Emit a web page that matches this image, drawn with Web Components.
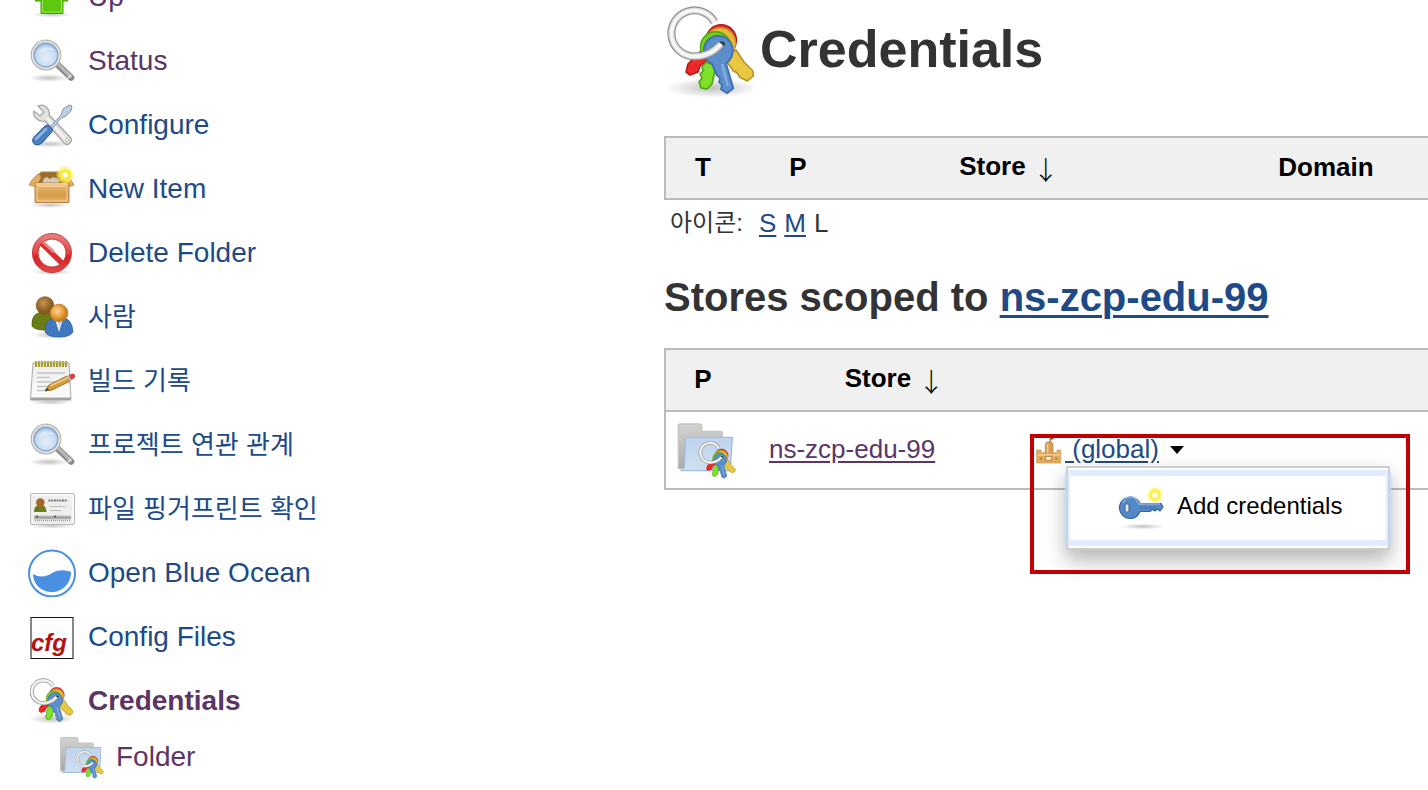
<!DOCTYPE html>
<html lang="ko">
<head>
<meta charset="utf-8">
<title>Credentials</title>
<style>
html { background: #fff; }
body { margin: 0; height: 100vh; overflow: hidden; color: #333;
  font-family: "Liberation Sans", "Noto Sans CJK KR", sans-serif; font-size: 26px; }
</style>
</head>
<body>
<credentials-page></credentials-page>

<script>
const define = (name, html, setup) => {
  const template = document.createElement('template');
  template.innerHTML = html;
  customElements.define(name, class extends HTMLElement {
    connectedCallback() {
      if (this.shadowRoot) return;
      const content = template.content.cloneNode(true);
      if (setup) setup(this, content);
      this.attachShadow({ mode: 'open' }).append(content);
    }
  });
};

/* ---------- icon drawings, all on a 48 unit grid ---------- */
const shade = (cx, cy, rx, ry) =>
  `<radialGradient id="sh"><stop offset="0" stop-opacity=".24"/><stop offset=".5" stop-opacity=".12"/><stop offset="1" stop-opacity="0"/></radialGradient>
   <ellipse cx="${cx}" cy="${cy}" rx="${rx}" ry="${ry}" fill="url(#sh)"/>`;

const ring = 'M28.500 20C25.500 23.500 21 26.200 15.200 26.200A11.500 11.500 0 1 1 25.200 9';
const keys = `
  <g stroke-linejoin="round">
    <path d="M20 22l4 4-6 5-1 3-4 1.500-2-1.500 1-4z" fill="#ef2929" stroke="#b81818" stroke-width=".8"/>
    <circle cx="28.600" cy="18" r="7.600" fill="#dd3325" stroke="#b81818" stroke-width=".7"/>
    <path d="M30 27l6-4 4 6 4.500 4.500.2 2.500-3 2.500-4-2-1-2-2-1z" fill="#e8c840" stroke="#b8922a" stroke-width=".8"/>
    <circle cx="28.200" cy="19.500" r="7.600" fill="#e9b93a" stroke="#c8902c" stroke-width=".7"/>
    <path d="M21 29l5 2-2 9-2.500 2.500-3-.5-1-3 1.500-2-1-2 1.500-1.500-.5-2z" fill="#7fe02a" stroke="#4fa313" stroke-width=".8"/>
    <circle cx="25.800" cy="21.500" r="7.600" fill="#73d216" stroke="#4fa313" stroke-width=".7"/>
    <path d="M27 15.800a7.500 7.500 0 0 1 4 13.800l3.700 12.600-3.200 2.400-3-2 .5-2-1.500-1.500.5-2-1.700-1.500L24 30a7.500 7.500 0 0 1 3-14.200z" fill="#5b8fcc" stroke="#3f6fae" stroke-width=".9"/>
    <path d="M29 30l3 11" stroke="#86ade0" stroke-width="1.200" fill="none"/>
    <ellipse cx="28.800" cy="20" rx="1.800" ry="1.400" fill="#314b5e"/>
  </g>
  <path d="${ring}" fill="none" stroke="#8c8c8c" stroke-width="4"/>
  <path d="${ring}" fill="none" stroke="#d8d8d8" stroke-width="2.900"/>
  <path d="${ring}" fill="none" stroke="#f8f8f8" stroke-width="1.600"/>`;

const drawings = {
  up: `${shade(24, 41.500, 20, 3)}<path d="M23.500 6 7 28H13V40.500H35V28H40z" fill="#5ec80e" stroke="#44a008"/><path d="M14.500 26V39H33.500V26" fill="none" stroke="#98ea58"/>`,
  search: `${shade(21, 41, 20, 4)}
    <path d="M30 28 43 40.500" stroke="#858585" stroke-width="6.500" stroke-linecap="round"/>
    <path d="M31 28 42.500 39.500" stroke="#b8b8b8" stroke-width="3.500" stroke-linecap="round"/>
    <path d="M40 41 43 38" stroke="#ddd" stroke-width="2"/>
    <radialGradient id="lens" cx=".5" cy=".6" r=".6"><stop offset="0" stop-color="#e6effa"/><stop offset=".7" stop-color="#c6dbf3"/><stop offset="1" stop-color="#8fb4e0"/></radialGradient>
    <circle cx="18" cy="18" r="14.800" fill="#e4e4e0" stroke="#b5b5b1" stroke-width="1.200"/>
    <circle cx="18" cy="18" r="11.800" fill="url(#lens)" stroke="#7d9fca" stroke-width="1.300"/>
    <path d="M10 17q2-7 9-7 5 0 7 3-6-1-9 1-4 2-7 3z" fill="#fff" opacity=".35"/>`,
  tools: `${shade(22, 43, 22, 3.5)}
    <path d="M10 5q5-2 8 1 4 3 3 8l21 22q3 3 0 6t-6 0L17 20q-5 1-8-2-4-3-3-8l6 5 4-4z" fill="#e2e2df" stroke="#a3a3a0" stroke-width="1.200"/>
    <path d="M19 17 38 39" stroke="#f6f6f4" stroke-width="2"/>
    <circle cx="39" cy="39" r="1.600" fill="#fff" stroke="#999" stroke-width=".7"/>
    <path d="M22 26 33 14l2-6 6-4 3 1-1 5-5 5-5 2-9 11z" fill="#bfcfe2" stroke="#8298b6" stroke-width="1"/>
    <path d="M17 25q2-2 4.500 0l2 2q2 2 0 4.500L14 42q-3 3-7 1.500-4-3-1.500-7z" fill="#4a80c0" stroke="#2c5a98" stroke-width="1"/>
    <path d="M18 28 8 38" stroke="#8fb5e2" stroke-width="2.500" stroke-linecap="round"/>`,
  box: `${shade(22, 40, 21, 3)}
    <path d="M9 13 13 7H36L40 13V20H9z" fill="#9a6c30" stroke="#b5813f" stroke-width="1"/>
    <path d="M15 15q3-5 7-1 4-4 9 1v4H15z" fill="#d2cbbd"/>
    <path d="M11 8 4 15 1 20 8 22 13 13zM38 8l5 7 3 5-6 2-5-9z" fill="#e2ad64" stroke="#bd8645" stroke-width=".8"/>
    <linearGradient id="crate" x2="0" y2="1"><stop stop-color="#ebbd7c"/><stop offset=".6" stop-color="#d69c4b"/><stop offset="1" stop-color="#e8b26b"/></linearGradient>
    <path d="M7 18H41L41 37.500H7z" fill="url(#crate)" stroke="#b98140"/>
    <path d="M8 18H40L38 22H9z" fill="#f0ca90"/>
    <path d="M9 23V36H39V23" fill="none" stroke="#f3ce94"/>
    <circle cx="37" cy="10" r="8.500" fill="#fcf25c" opacity=".6"/><circle cx="37" cy="10" r="6" fill="#fbe93b"/><circle cx="37" cy="10" r="2.500" fill="#fff"/>`,
  no: `${shade(24, 43, 20, 3)}
    <linearGradient id="ban" x2="0" y2="1"><stop stop-color="#e98383"/><stop offset=".5" stop-color="#df4545"/><stop offset=".6" stop-color="#d42020"/><stop offset="1" stop-color="#de4b4b"/></linearGradient>
    <path d="M24 4.500a19.500 19.500 0 1 1-.1 0zM24 10a14 14 0 1 0 .1 0z" fill="url(#ban)" fill-rule="evenodd" stroke="#ce3838" stroke-width="1"/>
    <path d="M15 12.500 36 32l-4 4L11.500 16z" fill="#d92e2e"/><path d="M15 13 26 23" stroke="#e98a8a" stroke-width="3"/>`,
  people: `${shade(25, 42, 21, 4)}
    <radialGradient id="h1" cx=".4" cy=".35"><stop stop-color="#c99551"/><stop offset="1" stop-color="#8a5a1d"/></radialGradient>
    <radialGradient id="h2" cx=".4" cy=".4"><stop stop-color="#fbd59a"/><stop offset=".6" stop-color="#eaa544"/><stop offset="1" stop-color="#cd8220"/></radialGradient>
    <path d="M4 33q-1-14 12-14 13 0 14 14-5 4-14 4T4 33z" fill="#6b7d15" stroke="#4e5f0b" stroke-width=".8"/>
    <circle cx="17" cy="12.500" r="8.800" fill="url(#h1)" stroke="#75501f" stroke-width=".7"/>
    <path d="M17 39q0-15 14-15 13 0 14 15-3 5-14 5t-14-5z" fill="#3f78be" stroke="#2b5c9d" stroke-width=".8"/>
    <path d="M27 26 31 39 35 26z" fill="#f3f6fa"/><path d="M30 28h3l-1.500 9z" fill="#c3d4e7"/>
    <circle cx="31" cy="20" r="8.900" fill="url(#h2)" stroke="#bb781f" stroke-width=".7"/>`,
  note: `${shade(23, 45, 22, 3)}
    <linearGradient id="sheet" x2="0" y2="1"><stop stop-color="#ededed"/><stop offset="1" stop-color="#fbfbfb"/></linearGradient>
    <path d="M5 6H41L43 42H2.500z" fill="url(#sheet)" stroke="#aaa"/><path d="M2.500 40.500H43V43.500H2.500z" fill="#a2a29f"/>
    <path d="M8 4V10M11 4V10M14 4V10M17 4V10M20 4V10M23 4V10M26 4V10M29 4V10M32 4V10M35 4V10M38 4V10" stroke="#a89c34" stroke-width="2.100"/>
    <path d="M7 5.500H40" stroke="#c6bc63" stroke-width="1"/>
    <path d="M9 16H37M9 20.500H22M9 25H33M9 29.500H22M9 33.500H19" stroke="#c4c4c4" stroke-width="1.500"/>
    <path d="M17 34 21 28 39 19 42 24 24 33z" fill="#d99b35" stroke="#805c22" stroke-width=".8"/><path d="M22 29 40 20.500" stroke="#f5cf78" stroke-width="1.500"/>
    <path d="M17 34 19 31 21 33z" fill="#333"/><path d="M39 19 41 18 43 23 41.500 24z" fill="#bbb"/><path d="M41 18q4-3 6 0 1 3-4 5z" fill="#db4040"/>`,
  card: `${shade(24, 41, 24, 2.5)}
    <rect x="2.500" y="8.500" width="44" height="31" rx="1.500" fill="#eeeeec" stroke="#bababa"/><path d="M4 10H45V38" fill="none" stroke="#fff" stroke-width="1.200"/>
    <path d="M6 27q0-7 6-7 6.500 0 6.500 7z" fill="#6b7f20"/><circle cx="12.300" cy="17.500" r="4.300" fill="#a8662a"/>
    <path d="M20.500 15.500H39" stroke="#777" stroke-width="2" stroke-dasharray="2 .7"/><path d="M22 21.500H38M22 25.500H33" stroke="#bdbdbd" stroke-width="1.200"/>
    <path d="M6 32.500H43" stroke="#aaa" stroke-width="3.500"/><path d="M7 35.500H43" stroke="#999" stroke-width="1.500" stroke-dasharray="1 1"/><path d="M8 31.500H10M26 31.500H28" stroke="#444" stroke-width="1.500"/>`,
  ocean: `<circle cx="24" cy="24.500" r="23" fill="#fff" stroke="#4a90e2" stroke-width="2"/>
    <path d="M5 25C12 29 18 28 25 23.500 31 20 38 21 43 23 43 35 34 43 24 43 14 43 5 36 5 25z" fill="#4a90e2"/>`,
  cfg: `<rect x="3" y="4.500" width="42" height="41" fill="#fff" stroke="#111"/>
    <text x="3" y="38" fill="#b01212" font-family="Liberation Sans, sans-serif" font-size="24" font-style="italic" font-weight="bold">cfg</text>`,
  keys: shade(24, 42, 23, 5) + keys,
  folder: `<linearGradient id="back" x2="0" y2="1"><stop stop-color="#d2d2d0"/><stop offset="1" stop-color="#aaaaa7"/></linearGradient>
    <path d="M2.500 38V5.500Q2.500 4.500 4 4.500H18.500Q20 4.500 20 6V10H34Q35.500 10 35.500 11.500V38z" fill="url(#back)" stroke="#c4c4c2"/>
    <linearGradient id="front" x2="0" y2="1"><stop stop-color="#bdd4ed"/><stop offset="1" stop-color="#cfdff1"/></linearGradient>
    <path d="M8 14.500H43L41.500 38.500Q41.500 39.500 40 39.500H4Q6.800 39 7 36z" fill="url(#front)" stroke="#a3bddb"/>
    <g transform="translate(16.600 16.600) scale(.64)">${keys}</g>`,
  key: `${shade(24.5, 42.500, 22, 3)}
    <path d="M22 19.500H43L45 23 42 27 39.500 25 37 27 34.500 25.500 32 27.500H22q-3 7-9.500 7A10.700 10.700 0 1 1 22 19.500z" fill="#5488c7" stroke="#3465a4" stroke-width="1.200"/>
    <path d="M5 19q2-6 8-6 5 0 8 7h21" fill="none" stroke="#8cb2e0" stroke-width="1.500"/><path d="M22 24H38" stroke="#3c6eae"/>
    <rect x="7" y="20" width="4" height="8" rx="1.500" fill="#e6e6df" stroke="#375d8d"/>
    <circle cx="37" cy="11" r="7.500" fill="#fff35c" opacity=".7"/><circle cx="37" cy="11" r="5.500" fill="#fcf04c"/><circle cx="37" cy="11" r="2.700" fill="#fff"/>`,
  castle: `<path d="M26 13V6" stroke="#8f6a35" stroke-width="1.500"/><path d="M24 9 31 3V8z" fill="#e02c2c"/>
    <path d="M18.500 29V16Q18.500 11.500 24 11.500 30 11.500 30 16V29z" fill="#d5a055" stroke="#b07c36"/>
    <path d="M5.500 24H12V28H18V31H31V28H36V24H41.500V43.500H5.500z" fill="#e3ad60" stroke="#c9944c"/>
    <path d="M7 31.500H40" stroke="#f4cf91" stroke-width="2"/><path d="M22 15V28" stroke="#f1cd93" stroke-width="2.500"/>
    <rect x="19" y="33.500" width="9" height="6" fill="#fff0d5" stroke="#b8813a" stroke-width="1.500"/><path d="M10 35H14V39H10zM33 35H37V39H33z" fill="#c08a42"/>`
};

define('ui-icon', `<style>
  :host { display: block; flex: none; width: 48px; height: 48px; }
  svg { display: block; width: 100%; height: 100%; }
</style><svg viewBox="0 0 48 48" aria-hidden="true"></svg>`,
  (host, content) => { content.querySelector('svg').innerHTML = drawings[host.getAttribute('name')]; });

/* ---------- side panel entry ---------- */
define('task-link', `<style>
  :host { display: block; height: 64px; color: #204a87; }
  :host([visited]) { color: #5c3566; }
  :host([current]) { font-weight: bold; }
  :host([nested]) { height: 48px; padding-left: 30px; }
  a { display: flex; align-items: center; gap: 12px; height: 100%; color: inherit; text-decoration: none; font-size: 28px; line-height: 32px; white-space: nowrap; }
  :host([nested]) a { gap: 10px; }
  :host(:lang(ko)) a { font-size: 26px; }
</style><a href="#"><ui-icon></ui-icon><span><slot></slot></span></a>`,
  (host, content) => content.querySelector('ui-icon').setAttribute('name', host.getAttribute('icon')));

define('task-panel', `<style>
  :host { display: block; margin-top: -35px; padding-left: 28px; }
</style>
<nav>
  <task-link lang="en" icon="up" visited>Up</task-link>
  <task-link lang="en" icon="search" visited>Status</task-link>
  <task-link lang="en" icon="tools">Configure</task-link>
  <task-link lang="en" icon="box">New Item</task-link>
  <task-link lang="en" icon="no">Delete Folder</task-link>
  <task-link lang="ko" icon="people">사람</task-link>
  <task-link lang="ko" icon="note">빌드 기록</task-link>
  <task-link lang="ko" icon="search">프로젝트 연관 관계</task-link>
  <task-link lang="ko" icon="card">파일 핑거프린트 확인</task-link>
  <task-link lang="en" icon="ocean">Open Blue Ocean</task-link>
  <task-link lang="en" icon="cfg">Config Files</task-link>
  <task-link lang="en" icon="keys" visited current>Credentials</task-link>
  <task-link lang="en" icon="folder" visited nested>Folder</task-link>
</nav>`);

/* ---------- tables ---------- */
const tableCss = `
  :host { display: block; }
  table { width: calc(100% + 64px); table-layout: fixed; border-collapse: separate; border-spacing: 0; border: 2px solid #bbb; color: #000; }
  th { height: 58px; padding: 0 0 2px; background: #f0f0f0; font-size: 26px; line-height: 30px; white-space: nowrap; }
  .sort { display: inline-block; vertical-align: middle; font: 26px/28px "Noto Sans CJK KR", sans-serif; font-weight: 300; }
  .narrow { width: 74px; }`;

define('all-credentials', `<style>${tableCss}
  .provider { width: 116px; } .store { width: 306px; }
</style>
<table><thead><tr>
  <th class="narrow">T</th><th class="provider">P</th>
  <th class="store">Store <span class="sort">↓</span></th><th>Domain</th>
</tr></thead></table>`);

define('icon-size', `<style>
  :host { display: flex; align-items: center; gap: 8px; height: 46px; padding-left: 6px; font-size: 26px; line-height: 30px; }
  .label { font-size: 24px; margin-right: 8px; }
  a { color: #204a87; text-underline-offset: 3px; }
</style><span class="label">아이콘:</span><a href="#s">S</a><a href="#m">M</a><span>L</span>`);

define('context-menu', `<style>
  :host { display: block; box-sizing: border-box; width: 324px; border: 2px solid #ccc; padding: 2px 0; background: #fff; box-shadow: 0 10px 20px rgba(0,0,0,.3); }
  button { display: flex; align-items: center; gap: 11px; box-sizing: border-box; width: 328px; height: 76px; margin: 0 -4px; padding: 0 0 0 48px;
    border: 6px solid rgba(195,217,255,.5); border-radius: 6px; background: #fff; background-clip: padding-box; font: 24px/28px "Liberation Sans", sans-serif; color: #000; }
  span { padding-bottom: 4px; }
</style><button type="button"><ui-icon name="key"></ui-icon><span>Add credentials</span></button>`);

define('domain-link', `<style>
  :host { display: flex; align-items: center; position: relative; height: 32px; white-space: pre; }
  ui-icon { width: 32px; height: 32px; }
  a { color: #204a87; line-height: 30px; padding-bottom: 2px; text-underline-offset: 3px; }
  button { width: 16px; height: 16px; margin-left: 10px; padding: 0; border: 0; background: none; }
  svg { display: block; }
  context-menu { position: absolute; left: 33px; top: 32px; }
  .mark { position: absolute; left: -3px; top: 0; box-sizing: border-box; width: 380px; height: 140px; border: 4px solid #c00000; pointer-events: none; }
</style><ui-icon name="castle"></ui-icon><a href="#global">&nbsp;(global)</a><button type="button" aria-label="Open menu"><svg width="16" height="16" viewBox="0 0 16 16"><path d="M1 4H15L8 12z"/></svg></button><context-menu></context-menu><div class="mark"></div>`);

define('store-table', `<style>${tableCss}
  .store { width: 293px; padding-left: 16px; box-sizing: border-box; }
  td { height: 76px; padding: 0; border-top: 2px solid #bbb; }
  td:first-child { padding-left: 9px; }
  .name { padding: 0 0 2px 29px; height: 74px; }
  .name a { color: #5c3566; line-height: 30px; text-underline-offset: 3px; }
  ui-icon { width: 64px; height: 64px; }
</style>
<table><thead><tr>
  <th class="narrow">P</th><th class="store">Store <span class="sort">↓</span></th><th></th>
</tr></thead><tbody><tr>
  <td><ui-icon name="folder"></ui-icon></td>
  <td class="name"><a href="#store">ns-zcp-edu-99</a></td>
  <td><domain-link></domain-link></td>
</tr></tbody></table>`);

define('credentials-page', `<style>
  :host { display: grid; grid-template-columns: 664px minmax(0, 1fr); height: 100%; }
  task-panel, main { min-width: 0; }
  main { padding-top: 4px; overflow: hidden; }
  h1 { display: flex; align-items: center; margin: 0 0 36px; height: 96px; font-size: 52px; line-height: 60px; }
  h1 span { padding-bottom: 6px; }
  h1 ui-icon { width: 96px; height: 96px; }
  h2 { margin: 28px 0; font-size: 40px; line-height: 46px; }
  h2 a { color: #204a87; text-underline-offset: 4px; text-decoration-thickness: 3px; }
</style>
<task-panel></task-panel>
<main>
  <h1><ui-icon name="keys"></ui-icon><span>Credentials</span></h1>
  <all-credentials></all-credentials>
  <icon-size></icon-size>
  <h2>Stores scoped to <a href="#folder">ns-zcp-edu-99</a></h2>
  <store-table></store-table>
</main>`);
</script>
</body>
</html>
